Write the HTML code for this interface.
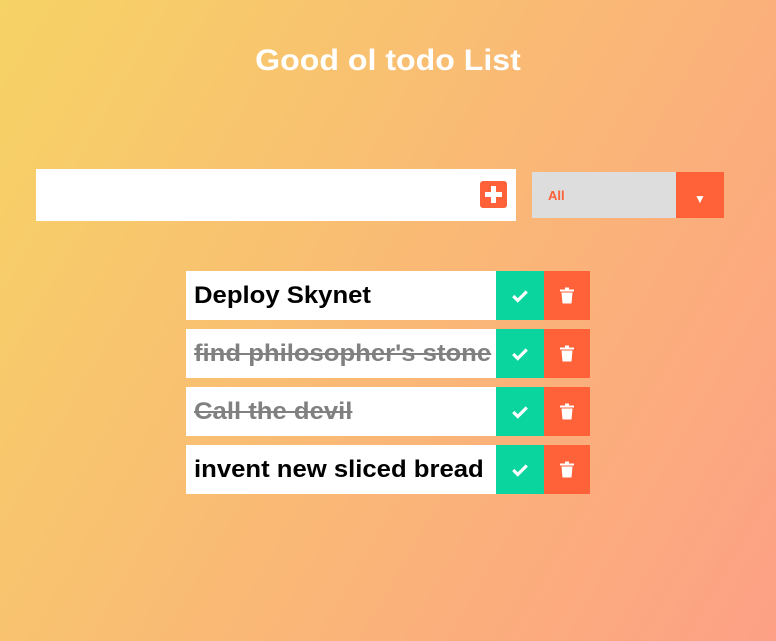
<!DOCTYPE html>
<html><head><style>
*{margin:0;padding:0;box-sizing:border-box}
html,body{width:776px;height:641px;overflow:hidden}
body{background:linear-gradient(120deg,#f6d365 0%,#fda085 100%);font-family:"Liberation Sans",sans-serif;position:relative}
h1{position:absolute;top:44px;left:0;width:776px;text-align:center;color:#fff;font-size:30px;font-weight:bold;transform:scaleX(1.07)}
.input{position:absolute;left:36px;top:169px;width:480px;height:52px;background:#fff}
.plus{position:absolute;left:444px;top:12px;width:27px;height:27px;background:#ff6138;border-radius:3px}
.plus:before{content:"";position:absolute;left:11px;top:5px;width:5px;height:17px;background:#fff}
.plus:after{content:"";position:absolute;left:5px;top:11px;width:17px;height:5px;background:#fff}
.sel{position:absolute;left:532px;top:172px;width:192px;height:46px;background:#ddd}
.sel span{position:absolute;left:16px;top:16px;color:#ff6138;font-weight:bold;font-size:13px}
.arrow{position:absolute;right:0;top:0;width:48px;height:46px;background:#ff6138;color:#fff;font-size:12px;text-align:center;padding-top:20px}
.row{position:absolute;left:186px;width:404px;height:49px;display:flex}
.t{width:310px;background:#fff;font-weight:bold;font-size:24px;padding:11px 0 0 8px;white-space:nowrap;overflow:hidden;color:#000}
.t span{display:inline-block;transform:scaleX(1.07);transform-origin:left}
.t.done span{text-decoration:line-through;color:#808080}
.c{width:48px;background:#0ad59e;display:flex;align-items:center;justify-content:center}
.d{width:46px;background:#ff6138;display:flex;align-items:center;justify-content:center}
</style></head><body>
<h1>Good ol todo List</h1>
<div class="input"><div class="plus"></div></div>
<div class="sel"><span>All</span><div class="arrow">▼</div></div>
<div class="row" style="top:271px"><div class="t"><span>Deploy Skynet</span></div><div class="c"><svg width="18" height="14" viewBox="0 0 16 12"><path d="M2 6l4 4 8-8" stroke="#fff" stroke-width="2.8" fill="none"/></svg></div><div class="d"><svg width="14" height="17" viewBox="0 0 14 16"><rect x="0" y="2" width="14" height="2" fill="#fff"/><rect x="5" y="0" width="4" height="2" fill="#fff"/><path d="M1.5 5h11l-1 11h-9z" fill="#fff"/></svg></div></div>
<div class="row" style="top:329px"><div class="t done"><span>find philosopher's stone</span></div><div class="c"><svg width="18" height="14" viewBox="0 0 16 12"><path d="M2 6l4 4 8-8" stroke="#fff" stroke-width="2.8" fill="none"/></svg></div><div class="d"><svg width="14" height="17" viewBox="0 0 14 16"><rect x="0" y="2" width="14" height="2" fill="#fff"/><rect x="5" y="0" width="4" height="2" fill="#fff"/><path d="M1.5 5h11l-1 11h-9z" fill="#fff"/></svg></div></div>
<div class="row" style="top:387px"><div class="t done"><span>Call the devil</span></div><div class="c"><svg width="18" height="14" viewBox="0 0 16 12"><path d="M2 6l4 4 8-8" stroke="#fff" stroke-width="2.8" fill="none"/></svg></div><div class="d"><svg width="14" height="17" viewBox="0 0 14 16"><rect x="0" y="2" width="14" height="2" fill="#fff"/><rect x="5" y="0" width="4" height="2" fill="#fff"/><path d="M1.5 5h11l-1 11h-9z" fill="#fff"/></svg></div></div>
<div class="row" style="top:445px"><div class="t"><span>invent new sliced bread</span></div><div class="c"><svg width="18" height="14" viewBox="0 0 16 12"><path d="M2 6l4 4 8-8" stroke="#fff" stroke-width="2.8" fill="none"/></svg></div><div class="d"><svg width="14" height="17" viewBox="0 0 14 16"><rect x="0" y="2" width="14" height="2" fill="#fff"/><rect x="5" y="0" width="4" height="2" fill="#fff"/><path d="M1.5 5h11l-1 11h-9z" fill="#fff"/></svg></div></div>
</body></html>
